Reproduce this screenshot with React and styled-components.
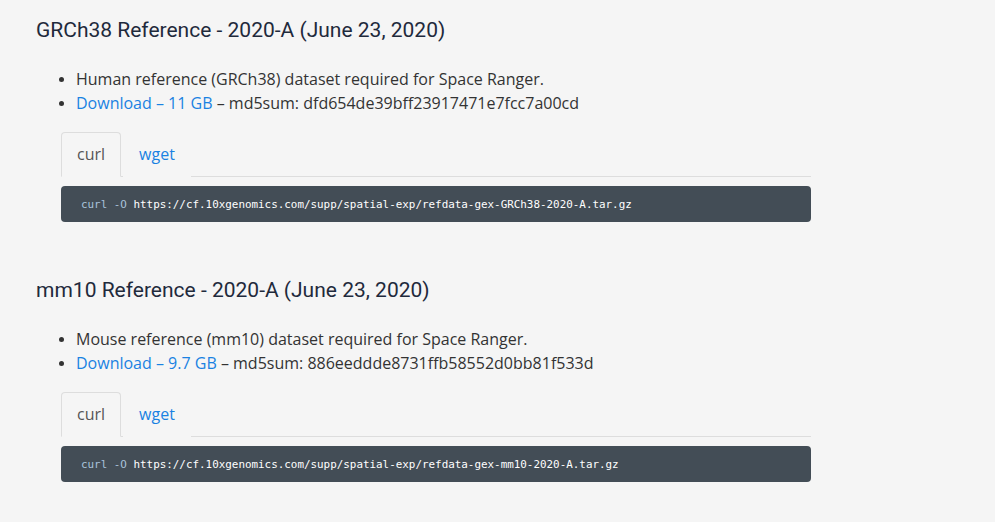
import React, { useState } from "react";
import styled, { createGlobalStyle } from "styled-components";

const GlobalStyle = createGlobalStyle`
  html, body {
    margin: 0;
    padding: 0;
    background: #f5f5f5;
  }
  body {
    font-family: "Open Sans", "Liberation Sans", sans-serif;
    color: #333333;
  }
`;

const Page = styled.main`
  padding: 14px 0 0 36px;
  width: 775px;
`;

const Section = styled.section`
  margin-bottom: 52px;
`;

const Title = styled.h2`
  margin: 0;
  font-family: "Roboto", "Liberation Sans", sans-serif;
  font-weight: 400;
  font-size: 21px;
  line-height: 32px;
  color: #1f2a3c;
`;

const List = styled.ul`
  margin: 21px 0 17px;
  padding-left: 40px;
  font-size: 16px;
  line-height: 24px;
  li::marker {
    font-size: 14px;
  }
`;

const Link = styled.a`
  color: #1a82e2;
  text-decoration: none;
`;

const Block = styled.div`
  margin-left: 25px;
  width: 750px;
`;

const Tabs = styled.div`
  display: flex;
  border-bottom: 1px solid #dddddd;
  height: 44px;
`;

const Tab = styled.button`
  font-family: "Open Sans", "Liberation Sans", sans-serif;
  font-size: 16px;
  padding: 0 15px 2px;
  margin: 0 2px -1px 0;
  background: #f5f5f5;
  border: 1px solid ${({ $active }) => ($active ? "#dddddd" : "transparent")};
  border-bottom-color: ${({ $active }) => ($active ? "#f5f5f5" : "transparent")};
  border-radius: 4px 4px 0 0;
  color: ${({ $active }) => ($active ? "#555555" : "#1a82e2")};
  cursor: pointer;
  height: 45px;
`;

const Code = styled.pre`
  margin: 9px 0 0;
  background: #434d56;
  border-radius: 4px;
  padding: 0 20px;
  height: 36px;
  display: flex;
  align-items: center;
  font-family: "DejaVu Sans Mono", "Liberation Mono", monospace;
  font-size: 10.9px;
  color: #ffffff;
`;

const Cmd = styled.span`
  color: #a9c3db;
  white-space: pre;
`;

const refs = [
  {
    title: "GRCh38 Reference - 2020-A (June 23, 2020)",
    desc: "Human reference (GRCh38) dataset required for Space Ranger.",
    size: "11 GB",
    md5: "dfd654de39bff23917471e7fcc7a00cd",
    file: "refdata-gex-GRCh38-2020-A.tar.gz",
  },
  {
    title: "mm10 Reference - 2020-A (June 23, 2020)",
    desc: "Mouse reference (mm10) dataset required for Space Ranger.",
    size: "9.7 GB",
    md5: "886eeddde8731ffb58552d0bb81f533d",
    file: "refdata-gex-mm10-2020-A.tar.gz",
  },
];

const RefBlock = ({ r }) => {
  const [tab, setTab] = useState("curl");
  const url = `https://cf.10xgenomics.com/supp/spatial-exp/${r.file}`;
  return (
    <Section>
      <Title>{r.title}</Title>
      <List>
        <li>{r.desc}</li>
        <li>
          <Link href="#">Download – {r.size}</Link> – md5sum: {r.md5}
        </li>
      </List>
      <Block>
        <Tabs>
          {["curl", "wget"].map((t) => (
            <Tab key={t} $active={tab === t} onClick={() => setTab(t)}>
              {t}
            </Tab>
          ))}
        </Tabs>
        <Code>
          <Cmd>{tab === "curl" ? "curl -O " : "wget "}</Cmd>
          {url}
        </Code>
      </Block>
    </Section>
  );
};

export default function App() {
  return (
    <>
      <GlobalStyle />
      <Page>
        {refs.map((r) => (
          <RefBlock key={r.file} r={r} />
        ))}
      </Page>
    </>
  );
}
